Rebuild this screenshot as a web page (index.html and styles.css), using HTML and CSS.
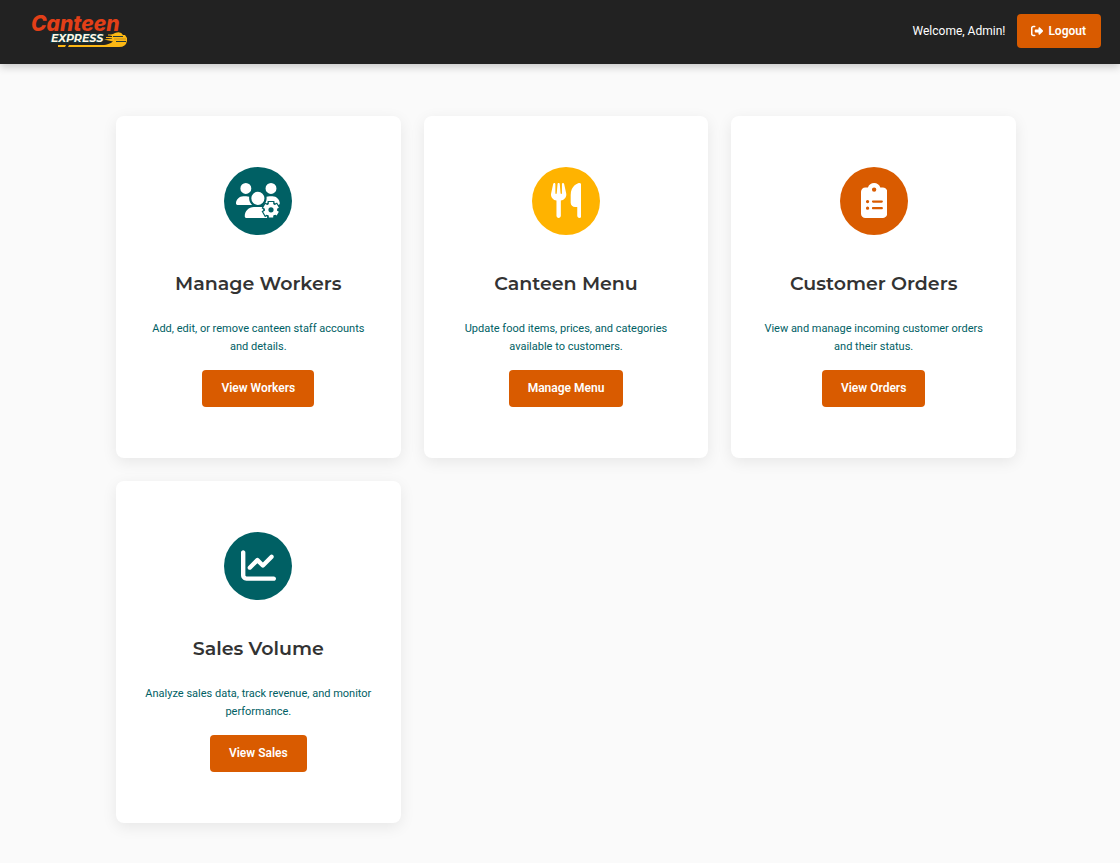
FILE: index.html
```html
<!DOCTYPE html>
<html lang="en">
<head>
<meta charset="utf-8">
<meta name="viewport" content="width=device-width, initial-scale=1">
<title>Canteen Express</title>
<link rel="stylesheet" href="styles.css">
</head>
<body>
<header class="topbar">
  <svg class="logo" viewBox="0 0 100 56" role="img" aria-label="Canteen Express">
    <text class="logo-name" x="1" y="28">Canteen</text>
    <path d="M74 36.500L82 35.500V33L80 32.500L85 30Q91 28 93 32H95L97 35L97 38Q96 44 89 44H38L39 42H72C78 42 81 40 83 38.500Z" fill="#fcb814"/>
    <path d="M28 42H36L35 44H28Z" fill="#fcb814"/>
    <path d="M83 33.500H93M86 38.500H96" stroke="#263b3c" stroke-width="1" fill="none"/>
    <path d="M78 32H89M76 34.500H84" stroke="#fcb814" stroke-width="1" fill="none"/>
    <path d="M84 36H96" stroke="#c88f18" stroke-width="1" fill="none"/>
    <text class="logo-sub" x="21" y="39">EXPRESS</text>
  </svg>
  <div class="account">
    <span>Welcome, Admin!</span>
    <button class="btn logout" type="button">
      <svg class="logout-icon" viewBox="0 0 512 512" aria-hidden="true"><path fill="currentColor" d="M377.9 105.9L500.7 228.7c7.2 7.2 11.3 17.1 11.3 27.3s-4.1 20.1-11.3 27.3L377.9 406.1c-6.4 6.4-15 9.9-24 9.9c-18.7 0-33.9-15.2-33.9-33.9l0-62.1-128 0c-17.7 0-32-14.3-32-32l0-64c0-17.7 14.3-32 32-32l128 0 0-62.1c0-18.7 15.2-33.9 33.9-33.9c9 0 17.6 3.6 24 9.9zM160 96L96 96c-17.7 0-32 14.3-32 32l0 256c0 17.7 14.3 32 32 32l64 0c17.7 0 32 14.3 32 32s-14.3 32-32 32l-64 0c-53 0-96-43-96-96L0 128C0 75 43 32 96 32l64 0c17.7 0 32 14.3 32 32s-14.3 32-32 32z"/></svg>
      Logout
    </button>
  </div>
</header>
<main class="dashboard">
  <div class="cards">
    <section class="card">
      <div class="badge teal">
        <svg class="icon" viewBox="0 0 640 512" aria-hidden="true">
          <path fill="currentColor" d="M144 160A80 80 0 1 0 144 0a80 80 0 1 0 0 160zm368 0A80 80 0 1 0 512 0a80 80 0 1 0 0 160zM0 298.7C0 310.4 9.6 320 21.3 320H235.300c-26.600-23.500-43.300-57.800-43.300-96c0-7.600.7-15 1.900-22.300c-13.600-6.300-28.700-9.700-44.600-9.700H106.700C47.800 192 0 239.800 0 298.700zM405.300 320H618.700c11.800 0 21.300-9.600 21.300-21.300C640 239.800 592.200 192 533.300 192H490.700c-15.900 0-31 3.500-44.600 9.700c1.300 7.200 1.900 14.700 1.900 22.300c0 38.200-16.800 72.500-43.300 96zM320 320a96 96 0 1 0 0-192a96 96 0 1 0 0 192zM261.300 352C187.700 352 128 411.700 128 485.300c0 14.700 11.900 26.700 26.700 26.700H455V352z"/>
          <g fill="#006064" stroke="#006064">
            <circle cx="512" cy="392" r="114"/>
            <path stroke-width="100" d="M512 262V522M399 327L625 457M399 457L625 327"/>
          </g>
          <path stroke="currentColor" stroke-width="64" d="M512 278V506M413 335L611 449M413 449L611 335"/>
          <circle cx="512" cy="392" r="90" fill="currentColor"/>
          <circle cx="512" cy="392" r="38" fill="#006064"/>
        </svg>
      </div>
      <h2>Manage Workers</h2>
      <p>Add, edit, or remove canteen staff accounts and details.</p>
      <button class="btn action" type="button">View Workers</button>
    </section>
    <section class="card">
      <div class="badge yellow">
        <svg class="icon" viewBox="0 0 448 512" aria-hidden="true"><path fill="currentColor" d="M416 0C400 0 288 32 288 176V288c0 35.3 28.7 64 64 64h32V480c0 17.7 14.3 32 32 32s32-14.3 32-32V352 240 32c0-17.7-14.3-32-32-32zM64 16C64 7.8 57.9 1 49.7 .1S34.2 4.6 32.4 12.500L2.100 148.800C.7 155.100 0 161.500 0 167.900c0 45.900 35.100 83.600 80 87.700V480c0 17.700 14.300 32 32 32s32-14.300 32-32V255.600c44.900-4.100 80-41.800 80-87.700c0-6.400-.7-12.800-2.100-19.100L191.600 12.500c-1.800-8-9.300-13.300-17.400-12.400S160 7.800 160 16V150.200c0 5.400-4.400 9.800-9.800 9.800c-5.100 0-9.300-3.900-9.800-9L127.900 14.600C127.200 6.300 120.300 0 112 0s-15.200 6.300-15.900 14.600L83.700 151c-.5 5.100-4.700 9-9.800 9c-5.400 0-9.800-4.400-9.800-9.800V16z"/></svg>
      </div>
      <h2>Canteen Menu</h2>
      <p>Update food items, prices, and categories available to customers.</p>
      <button class="btn action" type="button">Manage Menu</button>
    </section>
    <section class="card">
      <div class="badge orange">
        <svg class="icon" viewBox="0 0 384 512" aria-hidden="true"><path fill="currentColor" d="M192 0c-41.800 0-77.400 26.700-90.500 64H64C28.700 64 0 92.700 0 128V448c0 35.300 28.700 64 64 64H320c35.300 0 64-28.700 64-64V128c0-35.300-28.700-64-64-64H282.500C269.400 26.700 233.800 0 192 0zm0 64a32 32 0 1 1 0 64 32 32 0 1 1 0-64zM72 272a24 24 0 1 1 48 0 24 24 0 1 1 -48 0zm104-16H304c8.800 0 16 7.200 16 16s-7.200 16-16 16H176c-8.800 0-16-7.200-16-16s7.200-16 16-16zM72 368a24 24 0 1 1 48 0 24 24 0 1 1 -48 0zm88 0c0-8.800 7.200-16 16-16H304c8.800 0 16 7.200 16 16s-7.200 16-16 16H176c-8.800 0-16-7.200-16-16z"/></svg>
      </div>
      <h2>Customer Orders</h2>
      <p>View and manage incoming customer orders and their status.</p>
      <button class="btn action" type="button">View Orders</button>
    </section>
    <section class="card">
      <div class="badge teal">
        <svg class="icon" viewBox="0 0 512 512" aria-hidden="true"><path fill="currentColor" d="M64 64c0-17.700-14.300-32-32-32S0 46.300 0 64V400c0 44.200 35.800 80 80 80H480c17.700 0 32-14.300 32-32s-14.300-32-32-32H80c-8.800 0-16-7.200-16-16V64zm406.600 86.600c12.500-12.500 12.500-32.800 0-45.300s-32.800-12.500-45.300 0L320 210.700l-57.400-57.400c-12.500-12.500-32.800-12.500-45.300 0l-112 112c-12.500 12.500-12.500 32.800 0 45.300s32.800 12.500 45.300 0L240 221.300l57.400 57.400c12.500 12.500 32.800 12.500 45.300 0l128-128z"/></svg>
      </div>
      <h2>Sales Volume</h2>
      <p>Analyze sales data, track revenue, and monitor performance.</p>
      <button class="btn action" type="button">View Sales</button>
    </section>
  </div>
</main>
</body>
</html>
```

FILE: styles.css
```css
* {
  box-sizing: border-box;
}

body {
  margin: 0;
  background: #fafafa;
  color: #333;
  font-family: Roboto, sans-serif;
}

.topbar {
  display: flex;
  align-items: center;
  justify-content: space-between;
  min-height: 64px;
  padding: 3px 19px 5px 30px;
  background: #222;
  box-shadow: 0 3px 8px rgba(0, 0, 0, 0.2);
}

.logo {
  width: 100px;
  height: 56px;
}

.logo-name {
  fill: #e23f17;
  font: italic 800 21px Inter, sans-serif;
}

.logo-sub {
  fill: #fff7e5;
  stroke: #12343a;
  stroke-width: 2px;
  paint-order: stroke;
  font: italic 700 11px Montserrat, sans-serif;
}

.account {
  display: flex;
  align-items: center;
  gap: 12px;
  color: #fff;
  font-size: 12px;
}

.btn {
  border: 0;
  border-radius: 4px;
  background: #d95b00;
  color: #fff;
  font: 600 12px/16px Roboto, sans-serif;
  cursor: pointer;
}

.logout {
  display: flex;
  align-items: center;
  gap: 5px;
  padding: 9px 15px 9px 14px;
}

.logout-icon {
  width: 12px;
  height: 12px;
}

.dashboard {
  padding: 52px 24px 40px 36px;
}

.cards {
  display: grid;
  grid-template-columns: repeat(auto-fit, minmax(270px, 1fr));
  gap: 23px;
  max-width: 900px;
  margin: 0 auto;
}

.card {
  display: flex;
  flex-direction: column;
  align-items: center;
  padding: 51px 28px;
  border-radius: 8px;
  background: #fff;
  box-shadow: 0 4px 15px rgba(0, 0, 0, 0.08);
  text-align: center;
}

.badge {
  display: flex;
  align-items: center;
  justify-content: center;
  width: 68px;
  height: 68px;
  padding-bottom: 1px;
  border-radius: 50%;
  color: #fff;
}

.teal {
  background: #006064;
}

.yellow {
  background: #ffb300;
}

.orange {
  background: #d95b00;
}

.icon {
  height: 35px;
}

.card h2 {
  margin: 37px 0 24px;
  font: 600 19px/24px Montserrat, Inter, sans-serif;
}

.card p {
  margin: 0 0 14px;
  color: #006064;
  font-size: 11px;
  line-height: 18px;
}

.action {
  padding: 10px 19px 11px;
}
```
